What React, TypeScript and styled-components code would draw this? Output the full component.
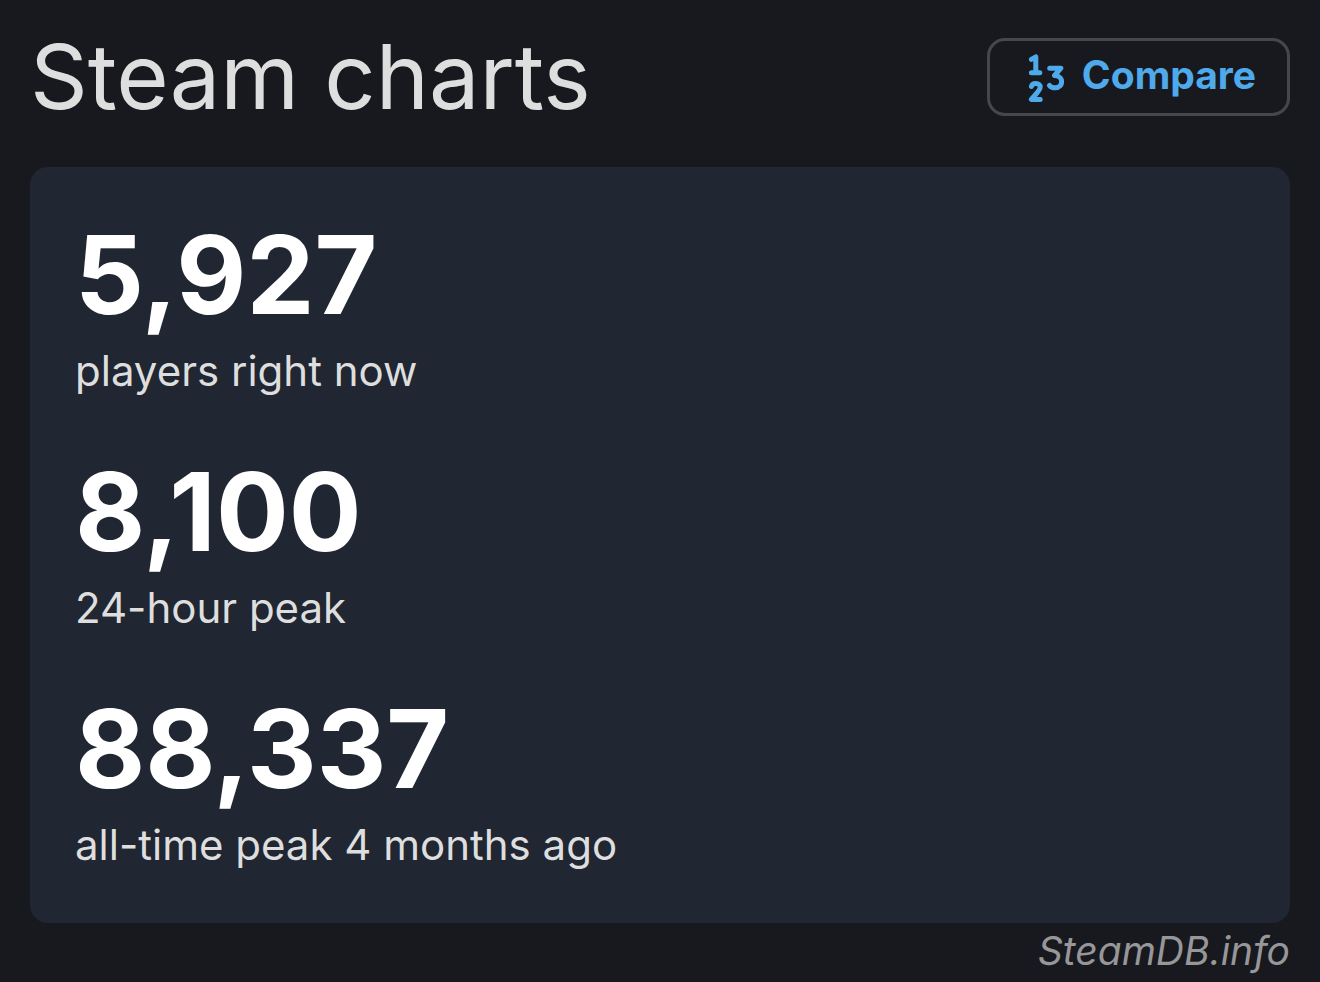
import React from "react";
import styled, { createGlobalStyle } from "styled-components";

const GlobalStyle = createGlobalStyle`
  * { box-sizing: border-box; }
  body {
    margin: 0;
    background: #18191e;
    color: #dedede;
    font-family: Inter, "Liberation Sans", sans-serif;
  }
`;

const Page = styled.main`
  padding: 23px 30px 0;
`;

const Header = styled.header`
  display: flex;
  align-items: center;
  justify-content: space-between;
  margin-bottom: 36px;
`;

const Title = styled.h1`
  margin: 0;
  font-size: 90px;
  line-height: 108px;
  font-weight: 400;
`;

const CompareButton = styled.button`
  display: flex;
  align-items: center;
  gap: 18px;
  height: 78px;
  padding: 0 31px 0 38px;
  border: 3px solid #46474b;
  border-radius: 18px;
  background: transparent;
  color: #4faaeb;
  font-family: inherit;
  font-size: 39px;
  font-weight: 700;
  cursor: pointer;
`;

const ButtonText = styled.span`
  padding-bottom: 5px;
`;

const Panel = styled.ul`
  display: flex;
  flex-direction: column;
  gap: 45px;
  margin: 0;
  padding: 45px;
  list-style: none;
  border-radius: 18px;
  background: #202632;
`;

const Stat = styled.li`
  display: flex;
  flex-direction: column;
`;

const Value = styled.strong`
  color: #fff;
  font-size: 108px;
  line-height: 126px;
  font-weight: 700;
`;

const Label = styled.span`
  font-size: 42px;
  line-height: 66px;
`;

const Source = styled.footer`
  color: #97979a;
  font-size: 39px;
  line-height: 56px;
  font-style: italic;
  text-align: right;
`;

const stats = [
  { value: "5,927", label: "players right now" },
  { value: "8,100", label: "24-hour peak" },
  { value: "88,337", label: "all-time peak 4 months ago" },
];

const NumbersIcon = () => (
  <svg width="36" height="50" viewBox="0 -2 36 50" fill="none" stroke="currentColor" strokeWidth="5" strokeLinecap="round" strokeLinejoin="round" aria-hidden="true">
    <path d="M3.400 5.400 7.800 2.800V18.700M3.400 18.700h8.400" />
    <path d="M3.400 32.500c1-4.200 8.800-4 8.800.6 0 3.200-3.400 6-8.800 12.300h8.800" />
    <path d="M21.700 14.200h11.200l-6.300 7.300c9.300 0 9.300 12.300.6 12.300-2.500 0-4.500-.8-5.700-2.400" />
  </svg>
);

export default function App() {
  return (
    <>
      <GlobalStyle />
      <Page>
        <Header>
          <Title>Steam charts</Title>
          <CompareButton type="button">
            <NumbersIcon />
            <ButtonText>Compare</ButtonText>
          </CompareButton>
        </Header>
        <Panel>
          {stats.map((stat) => (
            <Stat key={stat.label}>
              <Value>{stat.value}</Value>
              <Label>{stat.label}</Label>
            </Stat>
          ))}
        </Panel>
        <Source>SteamDB.info</Source>
      </Page>
    </>
  );
}
